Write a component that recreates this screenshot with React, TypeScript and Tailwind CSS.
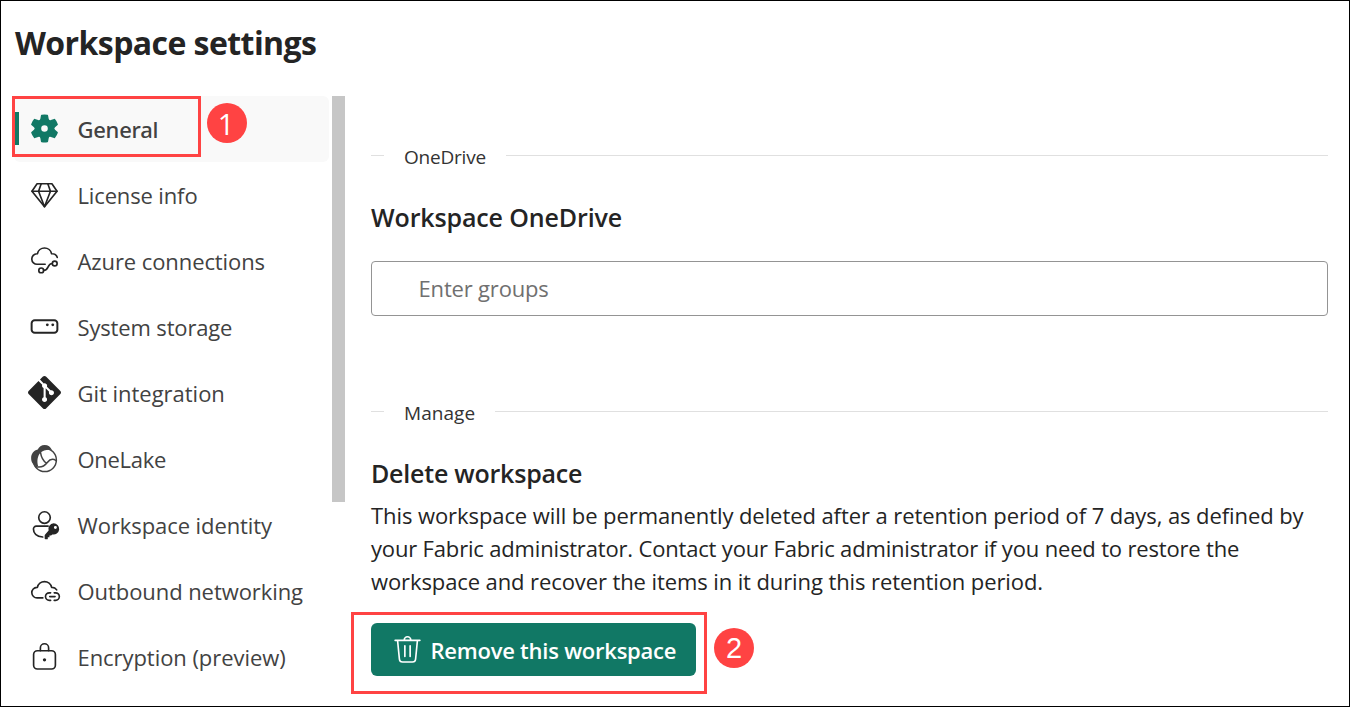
import type { ReactNode } from 'react';
import { SiGit } from 'react-icons/si';

function Icon({ children, className = 'text-[#242424]' }: { children: ReactNode; className?: string }) {
  return (
    <svg
      viewBox="0 0 20 20"
      className={`size-[33px] shrink-0 ${className}`}
      fill="none"
      stroke="currentColor"
      strokeWidth="1"
      strokeLinecap="round"
      strokeLinejoin="round"
    >
      {children}
    </svg>
  );
}

const GearIcon = () => (
  <Icon className="text-[#117865]">
    <path
      fill="currentColor"
      stroke="none"
      d="M1.91 7.38A8.5 8.5 0 0 1 3.7 4.3a.5.5 0 0 1 .54-.13l1.92.68a1 1 0 0 0 1.32-.76l.36-2a.5.5 0 0 1 .4-.4 8.53 8.53 0 0 1 3.55 0c.2.04.35.2.38.4l.37 2a1 1 0 0 0 1.32.76l1.92-.68a.5.5 0 0 1 .54.13 8.5 8.5 0 0 1 1.78 3.08c.06.2 0 .4-.15.54l-1.56 1.32a1 1 0 0 0 0 1.52l1.56 1.32a.5.5 0 0 1 .15.54 8.5 8.5 0 0 1-1.78 3.08.5.5 0 0 1-.54.13l-1.92-.68a1 1 0 0 0-1.32.76l-.37 2a.5.5 0 0 1-.38.4 8.53 8.53 0 0 1-3.56 0 .5.5 0 0 1-.39-.4l-.36-2a1 1 0 0 0-1.32-.76l-1.92.68a.5.5 0 0 1-.54-.13 8.5 8.5 0 0 1-1.78-3.08.5.5 0 0 1 .15-.54l1.56-1.32a1 1 0 0 0 0-1.52L2.06 7.92a.5.5 0 0 1-.15-.54ZM8 10a2 2 0 1 0 4 0 2 2 0 0 0-4 0Z"
    />
  </Icon>
);

const DiamondIcon = () => (
  <Icon>
    <path d="M5.5 3.5h9L17.600 8 10 17.400 2.400 8Z" />
    <path d="M2.400 8h15.200M8 3.500 6.400 8 10 17.400 13.600 8 12 3.500" />
  </Icon>
);

const CloudFlowIcon = () => (
  <Icon>
    <path d="M10.400 12.300H5.600a3.200 3.200 0 0 1-.2-6.400h.3a4.400 4.400 0 0 1 8.600 0h.3c1.500 0 2.700.9 3.100 2.200" />
    <circle cx="8" cy="16" r="1.450" />
    <circle cx="16.200" cy="11.800" r="1.450" />
    <path d="M9.500 16c3.600 0 1.800-4.100 5.200-4.200" />
  </Icon>
);

const StorageIcon = () => (
  <Icon>
    <rect x="2.200" y="6.200" width="15.600" height="7.600" rx="1.900" strokeWidth="1.200" />
    <circle cx="11.700" cy="9" r=".85" fill="currentColor" stroke="none" />
    <circle cx="15" cy="9" r=".85" fill="currentColor" stroke="none" />
  </Icon>
);

const GitIcon = () => <SiGit className="size-[33px] shrink-0 text-[#242424]" />;

const LakeIcon = () => (
  <Icon className="text-[#424242]">
    <circle cx="10.200" cy="10.900" r="7" strokeWidth=".9" />
    <path
      fill="currentColor"
      stroke="none"
      d="M5.900 4.600C6.600 2.900 8.200 1.800 10.100 1.800c2 0 3.700 1.100 4.400 3.100C12.200 4.200 9.300 4.900 7.400 6.600 5.700 8.600 5.300 11.700 6.200 14.800 3.600 14.700 1.900 12.500 1.900 9.800 1.900 7.300 3.500 5.100 5.900 4.600Z"
    />
    <path
      d="M7.600 6.400C8 9.200 9 11.200 11.200 12.900M4.500 14.800c3.100 1 5.200.2 7.200-2.400 1.500-1.900 3.600-2.300 5.300-1.100"
      strokeWidth=".9"
    />
  </Icon>
);

const IdentityIcon = () => (
  <Icon>
    <circle cx="10" cy="5.800" r="3.500" />
    <path d="M12.200 11H5a1.700 1.700 0 0 0-1.700 1.700c0 2.700 2.200 4.500 5.600 4.900" />
    <path
      fill="currentColor"
      stroke="none"
      fillRule="evenodd"
      d="M15.500 9.300a3.400 3.400 0 1 1-.8 6.700l-.7.7h-1v1.100h-1v.8a.4.4 0 0 1-.4.4h-1a.5.5 0 0 1-.5-.5v-1.700c0-.3.1-.5.3-.7l2.100-2.400a3.400 3.400 0 0 1 3-4.400Zm1.100 1.600a.9.9 0 1 0 0 1.800.9.9 0 0 0 0-1.800Z"
    />
  </Icon>
);

const CloudLinkIcon = () => (
  <Icon>
    <path d="M9 14.500H5.600a3.200 3.200 0 0 1-.2-6.400h.3a4.400 4.400 0 0 1 8.600 0h.3c1.200 0 2.200.6 2.800 1.500" />
    <path d="M13.700 11.400h-.8a2.300 2.300 0 0 0 0 4.600h.8M15.900 11.400h.8a2.300 2.300 0 0 1 0 4.600h-.8M13.200 13.700h3.200" />
  </Icon>
);

const LockIcon = () => (
  <Icon>
    <rect x="3.400" y="6.500" width="13.200" height="11.100" rx="2.300" />
    <path d="M7.500 6.500V4.800a2.500 2.500 0 0 1 5 0v1.700" />
    <circle cx="10" cy="12" r="1" fill="currentColor" stroke="none" />
  </Icon>
);

const TrashIcon = () => (
  <Icon className="text-white">
    <path d="M2.500 4.500h15M8 4.300a2 2 0 0 1 4 0M4 4.700l1.100 11.200a1.900 1.900 0 0 0 1.900 1.700h6a1.900 1.900 0 0 0 1.900-1.700L16 4.700M8.400 7.700v6.500M11.600 7.700v6.500" />
  </Icon>
);

const NAV = [
  { label: 'General', icon: <GearIcon />, text: "font-['Noto_Sans'] font-medium tracking-[-0.25px]", active: true },
  { label: 'License info', icon: <DiamondIcon />, text: 'tracking-[-0.14px]' },
  { label: 'Azure connections', icon: <CloudFlowIcon />, text: 'tracking-[-0.09px]' },
  { label: 'System storage', icon: <StorageIcon />, text: 'tracking-[-0.15px]' },
  { label: 'Git integration', icon: <GitIcon />, text: 'tracking-[-0.02px]' },
  { label: 'OneLake', icon: <LakeIcon />, text: 'tracking-[-0.3px]' },
  { label: 'Workspace identity', icon: <IdentityIcon />, text: 'tracking-[-0.08px]' },
  { label: 'Outbound networking', icon: <CloudLinkIcon />, text: 'tracking-[-0.07px]' },
  { label: 'Encryption (preview)', icon: <LockIcon />, text: 'tracking-[-0.06px]' },
];

function SectionRule({ label, className }: { label: string; className: string }) {
  return (
    <div className="flex h-[26px] items-center">
      <div className="mb-[3px] h-px w-[13px] bg-[#e0e0e0]" />
      <span className={`ml-5 mr-5 text-[19px] leading-[26px] text-[#333333] ${className}`}>{label}</span>
      <div className="mb-[3px] h-px flex-1 bg-[#e0e0e0]" />
    </div>
  );
}

function Badge({ n, className }: { n: number; className: string }) {
  return (
    <div
      className={`absolute flex size-10 items-center justify-center rounded-full bg-[#ff4343] text-[29px] leading-none text-white ${className}`}
    >
      {n}
    </div>
  );
}

export default function App() {
  return (
    <div className="relative flex h-[707px] w-[1350px] flex-col overflow-hidden border border-black bg-white font-['Open_Sans','Noto_Sans',sans-serif] text-[#242424]">
      <h1 className="h-[95px] shrink-0 pl-[14px] pt-5 text-[32px] font-bold leading-[44px] tracking-[-0.57px]">
        Workspace settings
      </h1>

      <div className="flex min-h-0 flex-1">
        <nav className="ml-[13px] w-[315px] shrink-0">
          {NAV.map((item) => (
            <a key={item.label} className={`flex h-[66px] items-center rounded-md ${item.active ? 'bg-[#f9f9f9]' : ''}`}>
              <span className={`mb-px ml-px h-[33px] w-1 ${item.active ? 'bg-[#117865]' : ''}`} />
              <span className="mb-px ml-[9px] flex">{item.icon}</span>
              <span className={`ml-[16.5px] mt-px whitespace-nowrap text-[22px] leading-[33px] text-[#424242] ${item.text}`}>
                {item.label}
              </span>
            </a>
          ))}
        </nav>
        <div className="ml-[3px] h-[406px] w-[13px] shrink-0 bg-[#c6c6c6]" />

        <main className="ml-[26px] w-[957px]">
          <div className="pt-[48px]">
            <SectionRule label="OneDrive" className="tracking-[-0.22px]" />
          </div>
          <h2 className="mt-[30px] text-[25px] font-semibold leading-[34px] tracking-[-0.13px]">Workspace OneDrive</h2>
          <div className="mt-[27px] flex h-[55px] items-center rounded-[4px] border border-[#949494] pl-[46.5px]">
            <span className="text-[22px] leading-[33px] tracking-[-0.17px] text-[#707070]">Enter groups</span>
          </div>
          <div className="pt-[84px]">
            <SectionRule label="Manage" className="tracking-[0.05px]" />
          </div>
          <h2 className="mt-[30px] text-[25px] font-semibold leading-[34px] tracking-[-0.22px]">Delete workspace</h2>
          <p className="mt-[9px] whitespace-nowrap text-[22px] leading-[33px]">
            <span className="block tracking-[-0.08px]">
              This workspace will be permanently deleted after a retention period of 7 days, as defined by
            </span>
            <span className="block tracking-[-0.17px]">
              your Fabric administrator. Contact your Fabric administrator if you need to restore the
            </span>
            <span className="block tracking-[-0.1px]">workspace and recover the items in it during this retention period.</span>
          </p>
          <button className="mt-[25px] flex h-[53px] w-[325px] items-center rounded-md bg-[#117865] pl-5 text-white">
            <TrashIcon />
            <span className="ml-[6.5px] mt-px whitespace-nowrap text-[22px] font-semibold leading-[33px] tracking-[-0.24px]">
              Remove this workspace
            </span>
          </button>
        </main>
      </div>

      <div className="absolute left-[11px] top-[95px] h-[61px] w-[189px] border-[3px] border-[#ff4343]" />
      <Badge n={1} className="left-[206px] top-[102px] pr-0.5" />
      <div className="absolute left-[350px] top-[611px] h-[82px] w-[356px] border-[3px] border-[#ff4343]" />
      <Badge n={2} className="left-[713px] top-[627px] font-['Liberation_Sans',sans-serif]" />
    </div>
  );
}
